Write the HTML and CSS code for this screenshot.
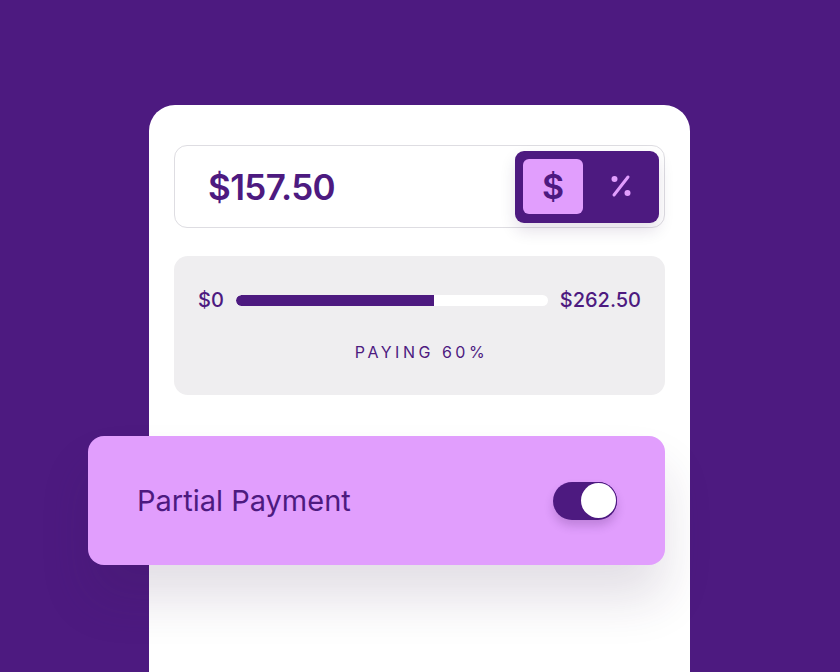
FILE: index.html
```html
<!DOCTYPE html>
<html>
<head>
<meta charset="utf-8">
<link rel="stylesheet" href="styles.css">
</head>
<body>
<div class="stage">
  <div class="card">
    <div class="amount-box">
      <span class="amount">$157.50</span>
      <div class="unit-switch">
        <div class="unit active">$</div>
        <div class="unit">
          <svg width="26" height="26" viewBox="0 0 26 26">
            <line x1="20" y1="4" x2="6" y2="22" stroke="#e19efd" stroke-width="3" stroke-linecap="round"/>
            <circle cx="6.5" cy="6" r="3" fill="#e19efd"/>
            <circle cx="19.5" cy="20" r="3" fill="#e19efd"/>
          </svg>
        </div>
      </div>
    </div>
    <div class="range-box">
      <div class="range-row">
        <span class="range-label">$0</span>
        <div class="track"><div class="fill" style="width:63.5%"></div></div>
        <span class="range-label">$262.50</span>
      </div>
      <div class="paying">PAYING 60%</div>
    </div>
    <div class="partial">
      <span class="partial-label">Partial Payment</span>
      <div class="switch"><div class="knob"></div></div>
    </div>
  </div>
</div>
</body>
</html>
```
FILE: styles.css
```css
html, body {
  margin: 0;
  padding: 0;
  height: 100%;
  overflow: hidden;
}
body {
  background: #4d1a80;
  font-family: "Inter", "Lato", sans-serif;
  color: #4d1a80;
}
.stage {
  padding-top: 105px;
  padding-left: 149px;
}
.card {
  width: 541px;
  height: 567px;
  box-sizing: border-box;
  background: #ffffff;
  border-radius: 26px 26px 0 0;
  padding: 40px 25px 0 25px;
}
.amount-box {
  height: 83px;
  box-sizing: border-box;
  border: 1.5px solid #dedde2;
  border-radius: 13px;
  display: flex;
  align-items: center;
  justify-content: space-between;
  padding: 0 5px 0 33px;
}
.amount {
  font-size: 35px;
  font-weight: 600;
  letter-spacing: -0.6px;
  padding-top: 1px;
}
.unit-switch {
  width: 144px;
  height: 72px;
  box-sizing: border-box;
  background: #4d1a80;
  border-radius: 9px;
  padding: 8px 8px 9px 8px;
  display: flex;
  gap: 8px;
  box-shadow: 0 8px 16px rgba(40, 10, 70, 0.12);
}
.unit {
  width: 60px;
  display: flex;
  align-items: center;
  justify-content: center;
  border-radius: 6px;
  font-size: 34px;
  font-weight: 600;
}
.unit.active {
  background: #e19efd;
  color: #4d1a80;
}
.range-box {
  margin-top: 28px;
  height: 139px;
  box-sizing: border-box;
  background: #efeef0;
  border-radius: 14px;
  padding: 30px 24px 0 24px;
}
.range-row {
  display: flex;
  align-items: center;
  gap: 12px;
  height: 28px;
}
.range-label {
  font-size: 20px;
  font-weight: 500;
  letter-spacing: 0;
}
.track {
  flex: 1;
  height: 11px;
  background: #ffffff;
  border-radius: 6px;
  overflow: hidden;
}
.fill {
  height: 100%;
  background: #4d1a80;
  border-radius: 6px 0 0 6px;
}
.paying {
  margin-top: 28px;
  text-align: center;
  font-size: 16px;
  letter-spacing: 3.5px;
  font-weight: 400;
  padding-left: 4px;
}
.partial {
  margin-top: 41px;
  margin-left: -86px;
  width: 577px;
  height: 129px;
  box-sizing: border-box;
  background: #e19efd;
  border-radius: 16px;
  display: flex;
  align-items: center;
  justify-content: space-between;
  padding: 0 48px 0 49px;
  box-shadow: 0 34px 50px rgba(60, 30, 80, 0.14);
}
.partial-label {
  font-size: 29px;
  font-weight: 400;
  letter-spacing: 0;
}
.switch {
  width: 64px;
  height: 38px;
  box-sizing: border-box;
  background: #4d1a80;
  border-radius: 19px;
  display: flex;
  align-items: center;
  justify-content: flex-end;
  padding-right: 1px;
  box-shadow: 0 6px 10px rgba(60, 20, 90, 0.2);
}
.knob {
  width: 35px;
  height: 35px;
  border-radius: 50%;
  background: #ffffff;
  box-shadow: 0 0 0 1px #4d1a80;
}
```
